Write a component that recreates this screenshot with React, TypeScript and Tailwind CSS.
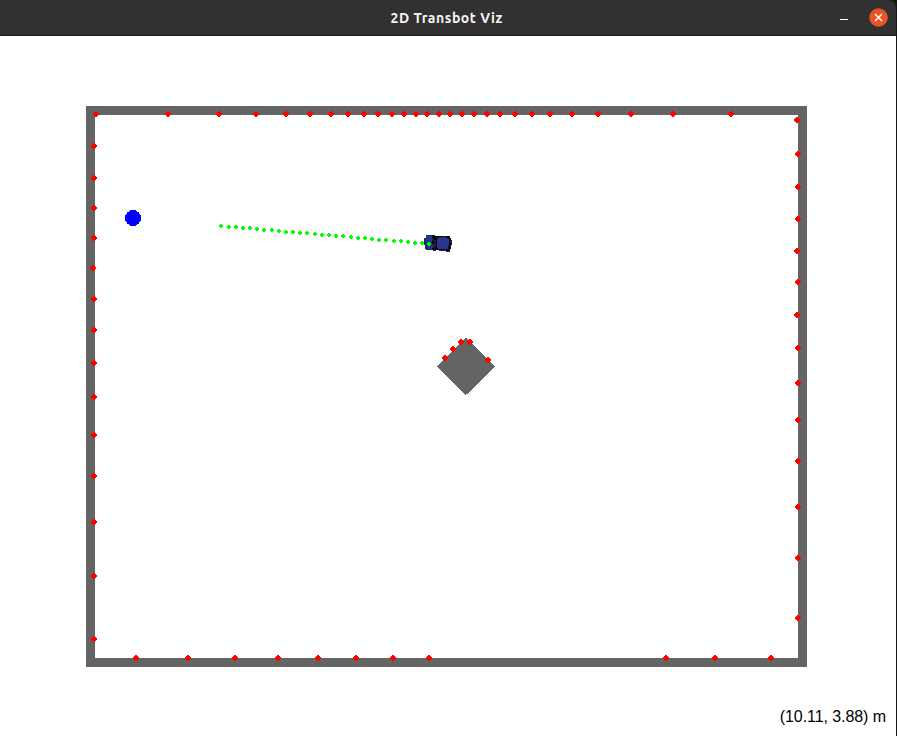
const top = [96, 168, 219, 256, 286, 310, 331, 348, 364, 378, 392, 404, 416, 427, 439, 450, 462, 474, 487, 500, 515, 532, 550, 572, 598, 631, 673, 731];
const left = [146, 178, 208, 238, 268, 299, 330, 363, 397, 435, 476, 522, 576, 639];
const right = [120, 154, 187, 219, 251, 282, 315, 348, 383, 420, 461, 507, 558, 618];
const bottom = [136, 188, 235, 278, 318, 356, 393, 429, 666, 715, 771];

const hits: [number, number][] = [
  ...top.map((x): [number, number] => [x, 114]),
  ...left.map((y): [number, number] => [y === 268 ? 93 : 94, y]),
  ...right.map((y): [number, number] => [[120, 251, 315].includes(y) ? 797 : 798, y]),
  ...bottom.map((x): [number, number] => [x, 658]),
  [445, 358],
  [453, 349],
  [461, 342],
  [470, 342],
  [488, 360],
];

const pathX = [221, 229, 236, 243, 250, 257, 264, 272, 279, 286, 293, 300, 307, 315, 322, 329, 336, 343, 351, 358, 365, 372, 379, 386, 394, 401, 408, 415, 422, 429];
const path = pathX.map((x): [number, number] => [x, Math.round(226 + ((x - 221) * 17.8) / 208)]);

function Hit({ x, y }: { x: number; y: number }) {
  return <path d={`M${x - 1} ${y - 3}h2v1h1v1h1v2h-1v1h-1v1h-2v-1h-1v-1h-1v-2h1v-1h1z`} fill="#ff0000" />;
}

function Waypoint({ x, y }: { x: number; y: number }) {
  return <path d={`M${x - 1} ${y - 2}h2v1h1v2h-1v1h-2v-1h-1v-2h1z`} fill="#00ff00" />;
}

function Car() {
  return (
    <g>
      <path d="M426 235h8v1h16v2h1v2h1v3h-1v5h-1v4h-4v-1h-7v-1h-3v1h-3v-1h-7v-1h-1v-4h-1v-7h2z" fill="#24265c" />
      <path d="M426 236h6v13h-5v-4h-1z" fill="#2c348c" />
      <path d="M432 235h3v1h4v2h-2v10h2v2h-7v-2h2v-4h-2v-3h1v-3h-1z" fill="#08080c" />
      <path d="M434 240h2v7h-2z" fill="#1b1d48" />
      <path d="M438 238h10v1h1v8h-1v2h-10v-2h-1v-7h1z" fill="#2b3490" />
      <path d="M439 236h4v1h-4zM446 236h4v2h1v3h-1v2h2v2h-1v4h-1v2h-4v-2h2v-3h1v-7h-1v-1h-2zM439 249h6v1h-6z" fill="#08080c" />
    </g>
  );
}

export default function App() {
  return (
    <div className="flex h-[736px] w-[897px] flex-col overflow-hidden bg-[#171516]">
      <header className="grid h-9 w-[896px] shrink-0 grid-cols-[1fr_auto_1fr] items-center rounded-tr-lg border-b border-[#1d1a1b] bg-[#333031]">
        <span />
        <h1 className="w-[115px] whitespace-nowrap font-['Ubuntu','Noto_Sans',sans-serif] text-[14px] leading-5 font-bold tracking-[0.55px] text-[#f5f5f5]">
          2D Transbot Viz
        </h1>
        <div className="flex items-center justify-end pr-2">
          <span className="mt-[3px] mr-[21px] h-px w-2 bg-white" />
          <svg width="19" height="19" viewBox="0 0 19 19" className="-mt-px">
            <circle cx="9.5" cy="9.5" r="9.3" fill="#e95420" />
            <path d="M6 6l7 7M13 6l-7 7" stroke="#fff" strokeWidth="1.5" />
          </svg>
        </div>
      </header>
      <main className="flex h-[700px] w-[896px] flex-col bg-white">
        <svg width="896" height="640" viewBox="0 36 896 640" shapeRendering="crispEdges" className="shrink-0">
          <path d="M86 106h721v561H86zM95 115v543h703V115z" fill="#646464" fillRule="evenodd" />
          <path d="M466 337.5L495 366.5L466 395L437 366.5z" fill="#646464" />
          <circle cx="133" cy="218" r="8" fill="#0000ff" />
          <Car />
          {path.map(([x, y]) => (
            <Waypoint key={x} x={x} y={y} />
          ))}
          {hits.map(([x, y]) => (
            <Hit key={`${x}-${y}`} x={x} y={y} />
          ))}
        </svg>
        <p className="mt-[31px] mr-[10px] self-end whitespace-nowrap font-['Liberation_Sans',Arial,sans-serif] text-[16px] leading-5 tracking-[-0.07px] text-black">
          (10.11, 3.88) m
        </p>
      </main>
    </div>
  );
}
